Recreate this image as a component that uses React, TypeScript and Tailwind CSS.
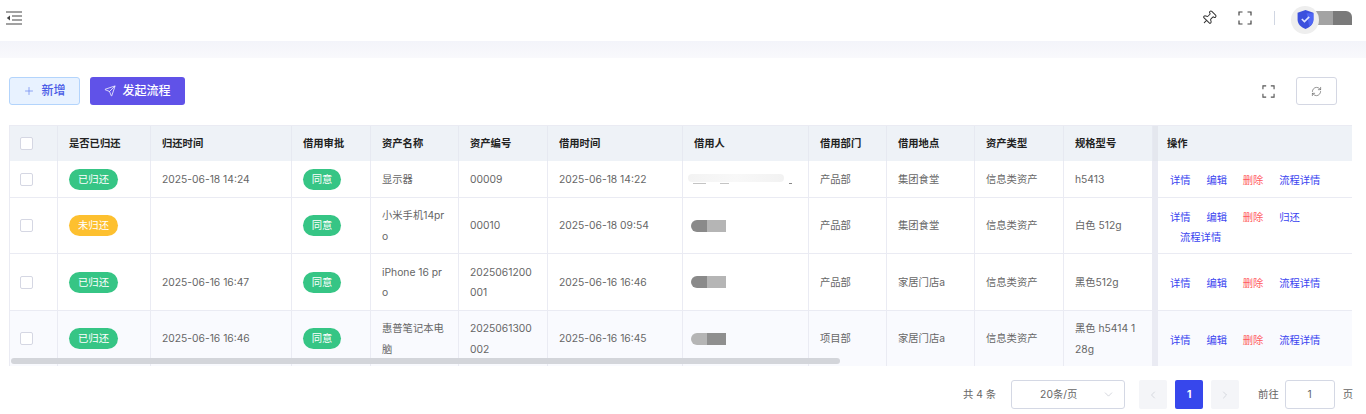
import React from 'react';
import { Plus, Send, RefreshCw, ChevronDown, ChevronLeft, ChevronRight, Pin } from 'lucide-react';

const rows = [
  { back: true, backTime: '2025-06-18 14:24', name: '显示器', code: '00009', time: '2025-06-18 14:22', dept: '产品部', place: '集团食堂', spec: 'h5413', h: 'h-[37px]' },
  { back: false, backTime: '', name: '小米手机14pro', code: '00010', time: '2025-06-18 09:54', dept: '产品部', place: '集团食堂', spec: '白色 512g', h: 'h-[56px]' },
  { back: true, backTime: '2025-06-16 16:47', name: 'iPhone 16 pro', code: '2025061200001', time: '2025-06-16 16:46', dept: '产品部', place: '家居门店a', spec: '黑色512g', h: 'h-[57px]' },
  { back: true, backTime: '2025-06-16 16:46', name: '惠普笔记本电脑', code: '2025061300002', time: '2025-06-16 16:45', dept: '项目部', place: '家居门店a', spec: '黑色 h5414 128g', h: 'h-[56px]' },
];

const headers = ['是否已归还', '归还时间', '借用审批', '资产名称', '资产编号', '借用时间', '借用人', '借用部门', '借用地点', '资产类型', '规格型号'];

const Corners = ({ className }: { className: string }) => (
  <svg viewBox="0 0 14 14" fill="none" stroke="currentColor" strokeWidth="1.2" className={className}>
    <path d="M1 4.5V1h3.5M9.5 1H13v3.5M13 9.5V13H9.5M4.5 13H1V9.5" />
  </svg>
);

// names are smudged out in the screenshot
const Redacted = ({ index }: { index: number }) => {
  if (index === 0) {
    return (
      <div className="-ml-[3px] flex w-[104px] flex-col gap-[1px]">
        <div className="h-[8px] w-[96px] rounded-sm bg-gradient-to-r from-[#f3f3f3] via-[#f8f8f8] to-[#f2f2f2]" />
        <div className="flex gap-[14px] pl-[5px]">
          <div className="h-px w-[16px] bg-[#c4c4c4]" />
          <div className="h-px w-[10px] bg-[#c4c4c4]" />
          <div className="ml-[46px] h-px w-[4px] bg-[#888]" />
        </div>
      </div>
    );
  }
  const swap = index === 3;
  return (
    <div className="flex h-[12px] w-[35px] overflow-hidden rounded-l-full blur-[0.4px]">
      <div className={`h-full w-[16px] ${swap ? 'bg-[#b5b5b5]' : 'bg-[#8a8a8a]'}`} />
      <div className={`h-full w-[19px] ${swap ? 'bg-[#8f8f8f]' : 'bg-[#b5b5b5]'}`} />
    </div>
  );
};

const Cell = ({ children }: { children?: React.ReactNode }) => (
  <td className="border-r border-b border-[#eaebf3] px-[11px] py-0 align-middle leading-[20.5px] break-all text-[#666]">{children}</td>
);

export default function App() {
  return (
    <div className="h-[414px] w-[1366px] overflow-hidden bg-white font-['Inter','Noto_Sans_CJK_SC',sans-serif] text-[10.3px]">
      <header className="box-border flex h-[41px] items-center justify-between pr-[14px] pb-[6px] pl-[6px]">
        <svg viewBox="0 0 16 14" fill="none" stroke="#444" strokeWidth="1" className="h-[14px] w-[16px]">
          <path d="M0 1h16M6 5h10M6 9h10M0 13h16" />
          <path d="M4 4.5v5L0.8 7z" fill="#444" stroke="none" />
        </svg>
        <div className="flex items-center">
          <Pin className="h-[16px] w-[16px] rotate-45 text-[#333]" strokeWidth={1.5} />
          <Corners className="ml-[21px] h-[14px] w-[14px] text-[#444]" />
          <div className="mr-[16px] ml-[22px] h-[14px] w-px bg-[#d0d6e2]" />
          <div className="relative mt-[4px] flex h-[28px] w-[28px] items-center justify-center rounded-full bg-[#eeeeee]">
            <svg viewBox="0 0 16 18" className="h-[19px] w-[17px]">
              <path d="M8 0l7.5 2.500V9c0 4.500-3.500 7.500-7.500 9-4-1.500-7.500-4.500-7.500-9V2.500z" fill="#3c50dd" />
              <path d="M9 3h6.500V9c0 3-1.500 5-4 6.500z" fill="#4f66f5" />
              <path d="M4.500 8.500l2.500 2.500 4.500-4.500" fill="none" stroke="#dfe5ff" strokeWidth="1.500" />
            </svg>
          </div>
          <div className="-ml-[5px] flex h-[14px] w-[38px] overflow-hidden rounded-tr-md">
            <div className="h-full w-[19px] bg-[#a3a3a3]" />
            <div className="h-full w-[19px] bg-[#7a7a7a]" />
          </div>
        </div>
      </header>
      <div className="h-[17px] bg-gradient-to-b from-[#f3f4fa] to-[#f9f9fc]" />

      <div className="px-[9px] pt-[19px]">
        <div className="flex h-[28px] items-center justify-between">
          <div className="flex gap-[10px]">
            <button className="flex h-[28px] w-[71px] items-center justify-center gap-[6px] rounded-[3px] border border-[#b3d4fc] bg-[#e8f2ff] text-[12px] font-medium text-[#4a5be6]">
              <Plus className="h-[12px] w-[12px] text-[#6d88f0]" strokeWidth={1.500} />
              新增
            </button>
            <button className="flex h-[28px] w-[95px] items-center justify-center gap-[6px] rounded-[3px] bg-[#6052e8] text-[12px] font-medium text-white">
              <Send className="h-[12px] w-[12px]" strokeWidth={1.500} />
              发起流程
            </button>
          </div>
          <div className="flex items-center pr-[20px]">
            <Corners className="h-[13px] w-[13px] text-[#555]" />
            <button className="ml-[21px] flex h-[28px] w-[41px] items-center justify-center rounded-[3px] border border-[#d4d7e3]">
              <RefreshCw className="h-[11px] w-[11px] text-[#666]" strokeWidth={1.500} />
            </button>
          </div>
        </div>

        <div className="relative mt-[20px] h-[241px] w-[1343px] overflow-hidden border-t border-l border-[#eaebf3]">
          <table className="w-[1343px] table-fixed border-separate border-spacing-0">
            <colgroup>
              <col className="w-[48px]" />
              <col className="w-[93px]" />
              <col className="w-[141px]" />
              <col className="w-[79px]" />
              <col className="w-[88px]" />
              <col className="w-[89px]" />
              <col className="w-[135px]" />
              <col className="w-[126px]" />
              <col className="w-[78px]" />
              <col className="w-[88px]" />
              <col className="w-[89px]" />
              <col className="w-[89px]" />
              <col />
            </colgroup>
            <thead>
              <tr className="h-[35px] bg-[#eef2f7] text-left font-semibold text-[#222]">
                <th className="border-r border-[#e6e9f1] align-middle font-semibold">
                  <div className="ml-[10px] h-[13px] w-[13px] rounded-[2px] border border-[#d5d7e3] bg-white" />
                </th>
                {headers.map((h) => (
                  <th key={h} className="border-r border-[#e6e9f1] px-[11px] font-semibold">{h}</th>
                ))}
                <th className="border-l-[5px] border-[#e4e7ee] pl-[9px] font-semibold">操作</th>
              </tr>
            </thead>
            <tbody>
              {rows.map((r, i) => (
                <tr key={r.code} className={`${r.h} ${i === 3 ? 'bg-[#f9fafe]' : 'bg-white'}`}>
                  <Cell>
                    <div className="-ml-[1px] h-[13px] w-[13px] rounded-[2px] border border-[#d5d7e3] bg-white" />
                  </Cell>
                  <Cell>
                    <span className={`inline-flex h-[21px] w-[49px] items-center justify-center rounded-full text-white ${r.back ? 'bg-[#36c585]' : 'bg-[#fdc02f]'}`}>
                      {r.back ? '已归还' : '未归还'}
                    </span>
                  </Cell>
                  <Cell>{r.backTime}</Cell>
                  <Cell>
                    <span className="inline-flex h-[21px] w-[38px] items-center justify-center rounded-full bg-[#36c585] text-white">同意</span>
                  </Cell>
                  <Cell>{r.name}</Cell>
                  <Cell>{r.code}</Cell>
                  <Cell>{r.time}</Cell>
                  <td className="border-r border-b border-[#eaebf3] pl-[8px] align-middle"><Redacted index={i} /></td>
                  <Cell>{r.dept}</Cell>
                  <Cell>{r.place}</Cell>
                  <Cell>信息类资产</Cell>
                  <Cell>{r.spec}</Cell>
                  <td className="border-b border-l-[5px] border-[#eaebf3] pt-[3px] pl-[12px] align-middle leading-[20.500px] text-[#3a44f0]">
                    <div className="flex flex-wrap gap-x-[15.800px]">
                      <span>详情</span>
                      <span>编辑</span>
                      <span className="text-[#ff5a5f]">删除</span>
                      {!r.back && <span className="mr-[30px]">归还</span>}
                      <span className={r.back ? '' : 'pl-[10px]'}>流程详情</span>
                    </div>
                  </td>
                </tr>
              ))}
            </tbody>
          </table>
          <div className="absolute top-[232px] left-[1px] h-[6px] w-[829px] rounded-full bg-[#d3d5da]" />
        </div>

        <div className="mt-[14px] flex h-[29px] items-center justify-end text-[10.300px] text-[#666]">
          <span>共 4 条</span>
          <div className="ml-[15px] flex h-[29px] w-[114px] items-center justify-between rounded-[3px] border border-[#d4d8e4] pr-[9px] pl-[28px]">
            <span>20条/页</span>
            <ChevronDown className="h-[13px] w-[13px] text-[#b0b4c0]" strokeWidth={1} />
          </div>
          <div className="ml-[14px] flex h-[29px] w-[28px] items-center justify-center rounded-[2px] bg-[#f4f5f8]">
            <ChevronLeft className="h-[12px] w-[12px] text-[#c0c4cc]" strokeWidth={1.200} />
          </div>
          <div className="ml-[8px] flex h-[29px] w-[28px] items-center justify-center rounded-[2px] bg-[#3747ec] font-bold text-white">1</div>
          <div className="ml-[8px] flex h-[29px] w-[28px] items-center justify-center rounded-[2px] bg-[#f4f5f8]">
            <ChevronRight className="h-[12px] w-[12px] text-[#c0c4cc]" strokeWidth={1.200} />
          </div>
          <span className="ml-[19px]">前往</span>
          <div className="ml-[6px] flex h-[29px] w-[50px] items-center justify-center rounded-[3px] border border-[#d4d8e4]">1</div>
          <span className="mr-[4px] ml-[8px]">页</span>
        </div>
      </div>
    </div>
  );
}
